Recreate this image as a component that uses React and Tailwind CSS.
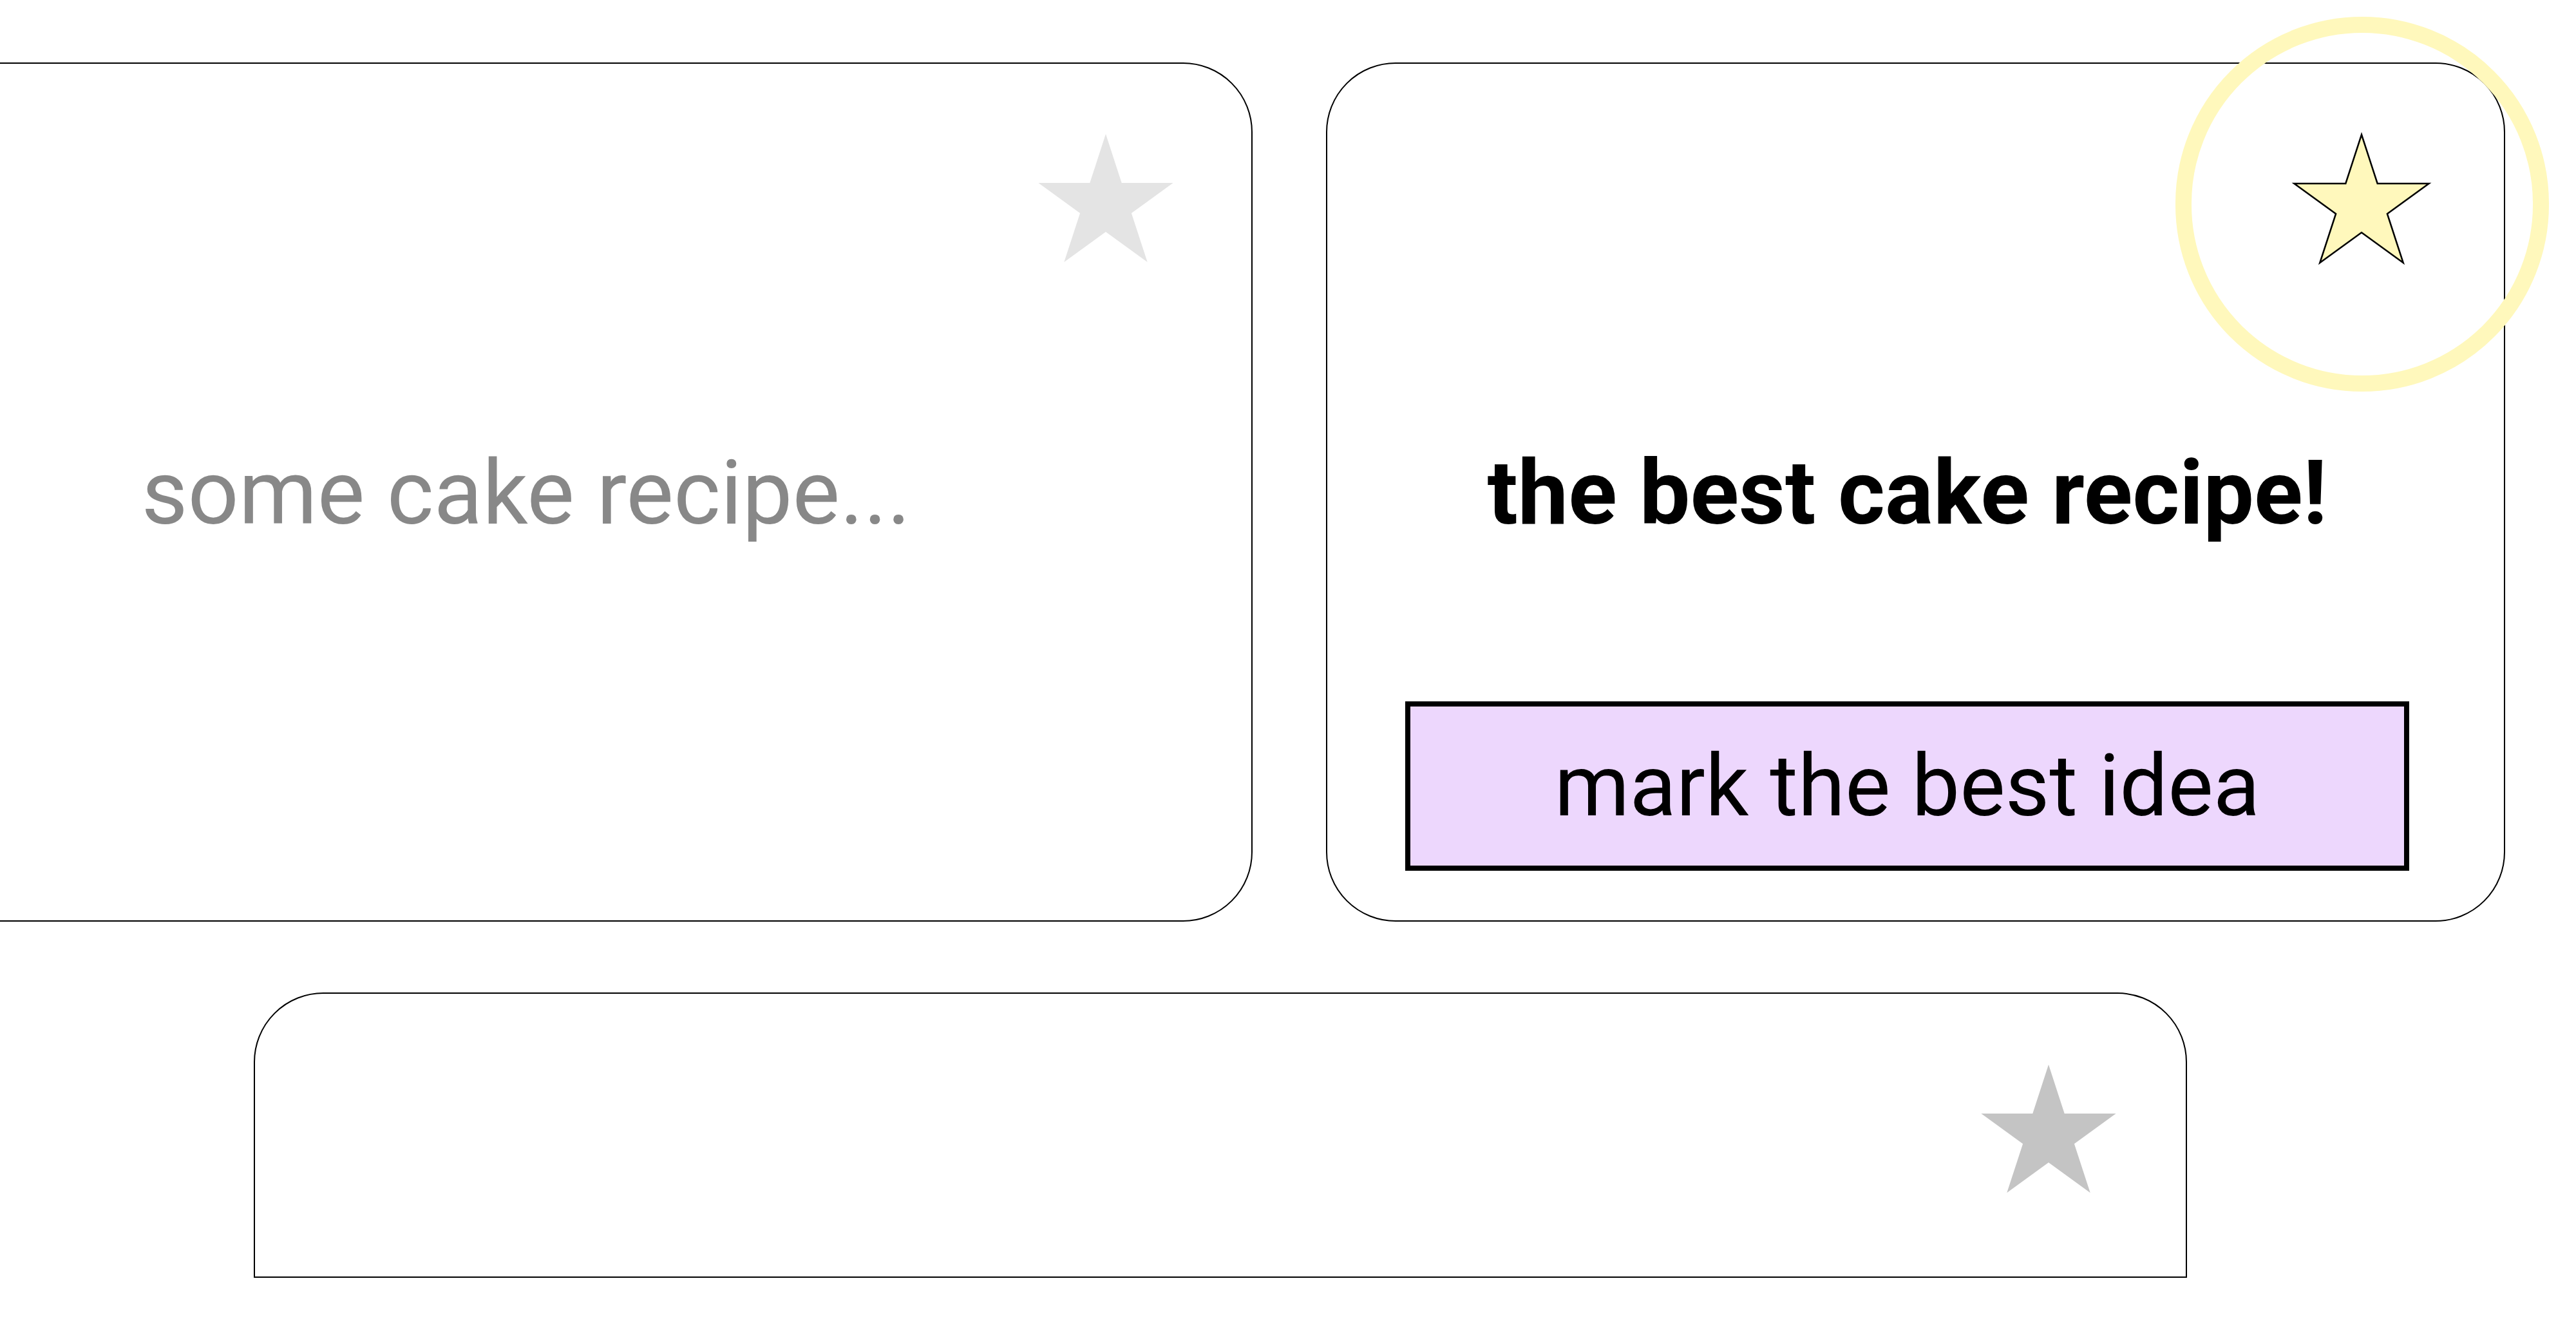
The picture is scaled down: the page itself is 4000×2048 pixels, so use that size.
const STAR_POINTS =
  '105,0 129.7,76 209.6,76 144.9,123 169.7,199 105,152 40.3,199 65.1,123 0.4,76 80.3,76'

function Star({ className, fill, stroke }) {
  return (
    <svg
      className={className}
      viewBox="0 0 210 200"
      width="210"
      height="200"
      overflow="visible"
      aria-hidden="true"
    >
      <polygon
        points={STAR_POINTS}
        fill={fill}
        stroke={stroke || 'none'}
        strokeWidth={stroke ? 2.5 : 0}
        strokeLinejoin="miter"
      />
    </svg>
  )
}

function IdeaCard({ className, children }) {
  return (
    <div className={`relative shrink-0 border-2 border-black bg-white ${className}`}>
      {children}
    </div>
  )
}

export default function App() {
  return (
    <div className="min-h-screen w-full overflow-hidden bg-white pt-[97px] font-['Roboto','Liberation_Sans',sans-serif]">
      <div className="flex gap-[114px] ml-[-285px]">
        <IdeaCard className="h-[1334px] w-[2230px] rounded-[108px]">
          <Star className="absolute right-[121px] top-[109px]" fill="#e4e4e4" />
          <div className="flex flex-col items-center pl-[121px] pr-[147px] pt-[582px]">
            <p className="text-[139px] leading-[169px] text-[#888888]">some cake recipe...</p>
          </div>
        </IdeaCard>

        <IdeaCard className="flex h-[1334px] w-[1831px] flex-col items-center rounded-[108px] pl-[121px] pr-[147px] pt-[582px] pb-[77px]">
          <Star className="absolute right-[116px] top-[110px]" fill="#fff8bc" stroke="#000" />
          <div className="pointer-events-none absolute left-[1317px] top-[-73px] h-[582px] w-[580px] rounded-full border-[25px] border-[#fff8bc]" />
          <p className="text-[140px] font-bold leading-[169px] text-black">the best cake recipe!</p>
          <button
            type="button"
            className="mt-auto flex h-[263px] w-full items-center justify-center border-8 border-black bg-[#edd7fd] text-[133px] leading-none text-black"
          >
            mark the best idea
          </button>
        </IdeaCard>
      </div>

      <div className="mt-[110px] flex">
        <IdeaCard className="ml-[394px] h-[443px] w-[3002px] rounded-t-[108px]">
          <Star className="absolute right-[108px] top-[110px]" fill="#c4c4c4" />
        </IdeaCard>
      </div>
    </div>
  )
}
